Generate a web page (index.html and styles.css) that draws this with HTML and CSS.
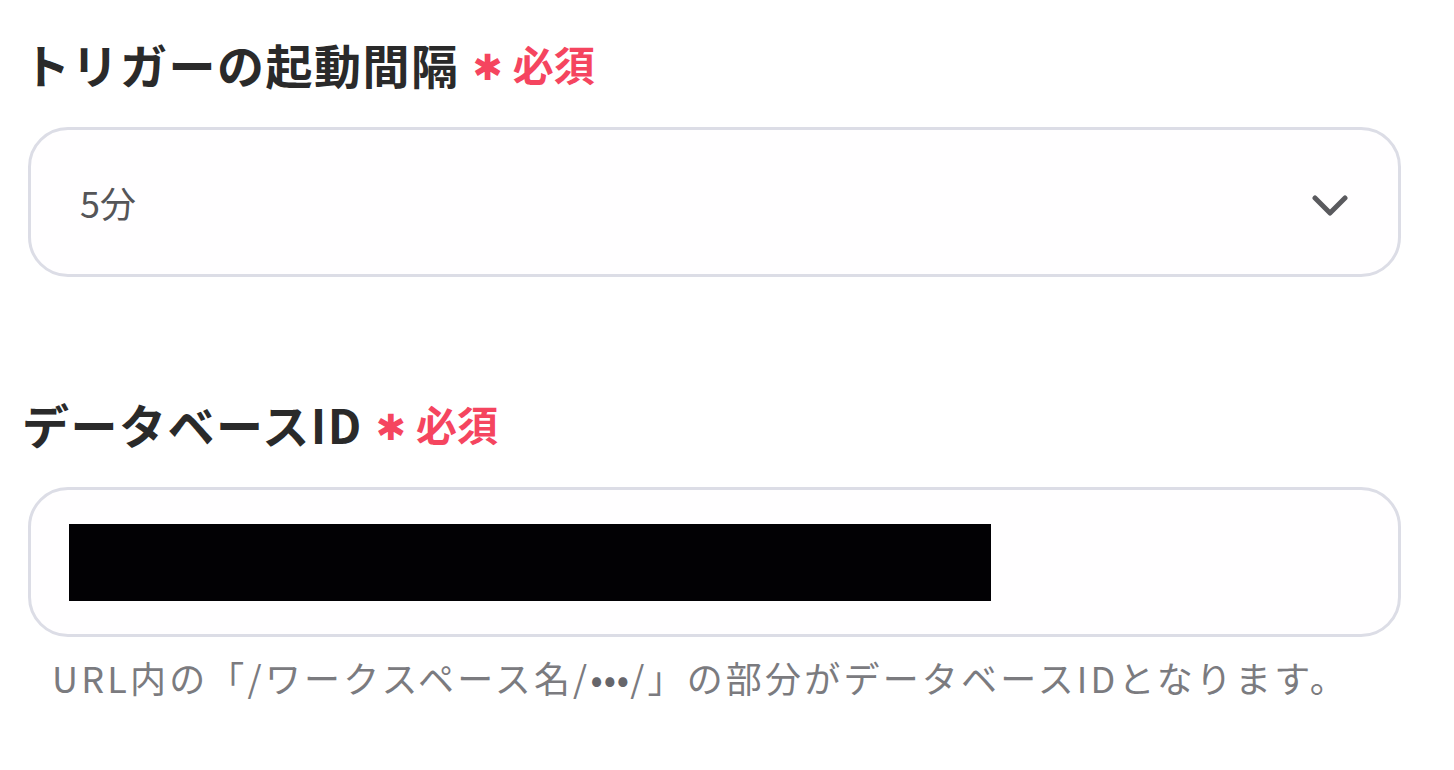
FILE: index.html
```html
<!DOCTYPE html>
<html lang="ja">
<head>
<meta charset="utf-8">
<link rel="stylesheet" href="styles.css">
</head>
<body>
<div class="form">
  <div class="field field-first">
    <div class="label label-1"><span class="label-text">トリガーの起動間隔</span><span class="req"><span class="star">✱</span>必須</span></div>
    <div class="box select">
      <span class="value">5分</span>
      <svg class="chevron" width="36" height="22" viewBox="0 0 36 22"><path d="M3 3 L18 18 L33 3" fill="none" stroke="#5a5a5e" stroke-width="5" stroke-linecap="round" stroke-linejoin="round"/></svg>
    </div>
  </div>
  <div class="field field-second">
    <div class="label label-2"><span class="label-text">データベースID</span><span class="req"><span class="star">✱</span>必須</span></div>
    <div class="box input">
      <div class="redact"></div>
    </div>
    <p class="help">URL内の「/ワークスペース名/<span class="dots">•••</span>/」の部分がデータベースIDとなります。</p>
  </div>
</div>
</body>
</html>
```
FILE: styles.css
```css
html, body {
  margin: 0;
  padding: 0;
  background: #ffffff;
}
body {
  font-family: "Noto Sans CJK JP", "Noto Sans", sans-serif;
  color: #2b2b2b;
}
.form {
  padding: 0 53px 0 28px;
}
.field-first {
  padding-top: 31px;
}
.field-second {
  padding-top: 114px;
}
.label {
  display: flex;
  align-items: center;
  height: 64px;
}
.label-1 {
  margin-left: -5px;
}
.label-2 {
  margin-left: -6px;
}
.label-text {
  font-size: 47px;
  font-weight: 700;
  color: #2a2a2a;
  letter-spacing: 1.5px;
}
.req {
  display: flex;
  align-items: center;
  margin-left: 13px;
  font-size: 41px;
  font-weight: 700;
  color: #f5455f;
}
.star {
  font-family: "DejaVu Sans", sans-serif;
  font-size: 36px;
  margin-right: 10px;
  position: relative;
  top: 4px;
}
.box {
  box-sizing: border-box;
  height: 150px;
  border: 3px solid #dcdde6;
  border-radius: 40px;
  background: #fffeff;
  display: flex;
  align-items: center;
}
.select {
  margin-top: 32px;
  padding: 0 50px 0 49px;
  justify-content: space-between;
}
.value {
  font-size: 36px;
  color: #555558;
}
.chevron {
  display: block;
  margin-top: 8px;
}
.input {
  margin-top: 32px;
  padding-left: 38px;
}
.redact {
  width: 922px;
  height: 77px;
  background: #020104;
}
.help {
  margin: 16px 0 0 24px;
  font-size: 36px;
  color: #7b7b7f;
  line-height: 48px;
  letter-spacing: 3.2px;
}
.dots {
  color: #66666b;
  letter-spacing: 1px;
}
```
